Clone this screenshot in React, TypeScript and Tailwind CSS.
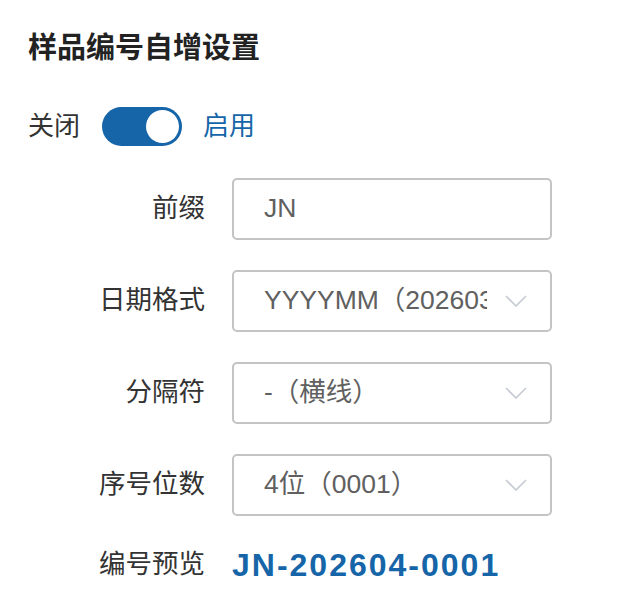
import React from "react";

const font = { fontFamily: '"Liberation Sans", "Noto Sans CJK SC", sans-serif' };

function Chevron() {
  return (
    <svg width="22" height="12" viewBox="0 0 22 12" fill="none" className="shrink-0">
      <path d="M1 1 L11 11 L21 1" stroke="#c6cad2" strokeWidth="1.6" />
    </svg>
  );
}

function Row({ label, children }: { label: string; children: React.ReactNode }) {
  return (
    <div className="flex items-center h-[62px]">
      <div className="w-[177px] text-right text-[26.5px] text-[#333333] shrink-0">{label}</div>
      <div className="ml-[27px]">{children}</div>
    </div>
  );
}

function Select({ value }: { value: string }) {
  return (
    <div className="w-[320px] h-[62px] border-2 border-[#c4c4c4] rounded-[5px] flex items-center pl-[30px] pr-[23px] bg-white">
      <div className="flex-1 overflow-hidden whitespace-nowrap text-[26.5px] text-[#606060]">{value}</div>
      <div className="ml-[18px]">
        <Chevron />
      </div>
    </div>
  );
}

export default function App() {
  return (
    <div className="w-[632px] h-[610px] bg-white pl-[28px] pt-[28px]" style={font}>
      <div className="text-[29px] leading-[40px] font-semibold text-[#222222]">样品编号自增设置</div>
      <div className="flex items-center mt-[38px] h-[40px]">
        <span className="text-[26px] text-[#333333]">关闭</span>
        <div className="ml-[22px] w-[80px] h-[39px] rounded-full bg-[#1565a8] flex items-center justify-end pr-[3px]">
          <div className="w-[33px] h-[33px] rounded-full bg-white" />
        </div>
        <span className="ml-[21px] text-[26px] text-[#1565a8]">启用</span>
      </div>
      <div className="mt-[32px] flex flex-col gap-[30px]">
        <Row label="前缀">
          <div className="w-[320px] h-[62px] border-2 border-[#c4c4c4] rounded-[5px] flex items-center pl-[30px] bg-white text-[26.5px] text-[#606060]">
            JN
          </div>
        </Row>
        <Row label="日期格式">
          <Select value="YYYYMM（202603）" />
        </Row>
        <Row label="分隔符">
          <Select value="-（横线）" />
        </Row>
        <Row label="序号位数">
          <Select value="4位（0001）" />
        </Row>
        <div className="flex items-center h-[38px]">
          <div className="w-[177px] text-right text-[26.5px] text-[#333333] shrink-0">编号预览</div>
          <div className="ml-[27px] text-[32px] font-bold text-[#1565a8] tracking-[2px]">JN-202604-0001</div>
        </div>
      </div>
    </div>
  );
}
